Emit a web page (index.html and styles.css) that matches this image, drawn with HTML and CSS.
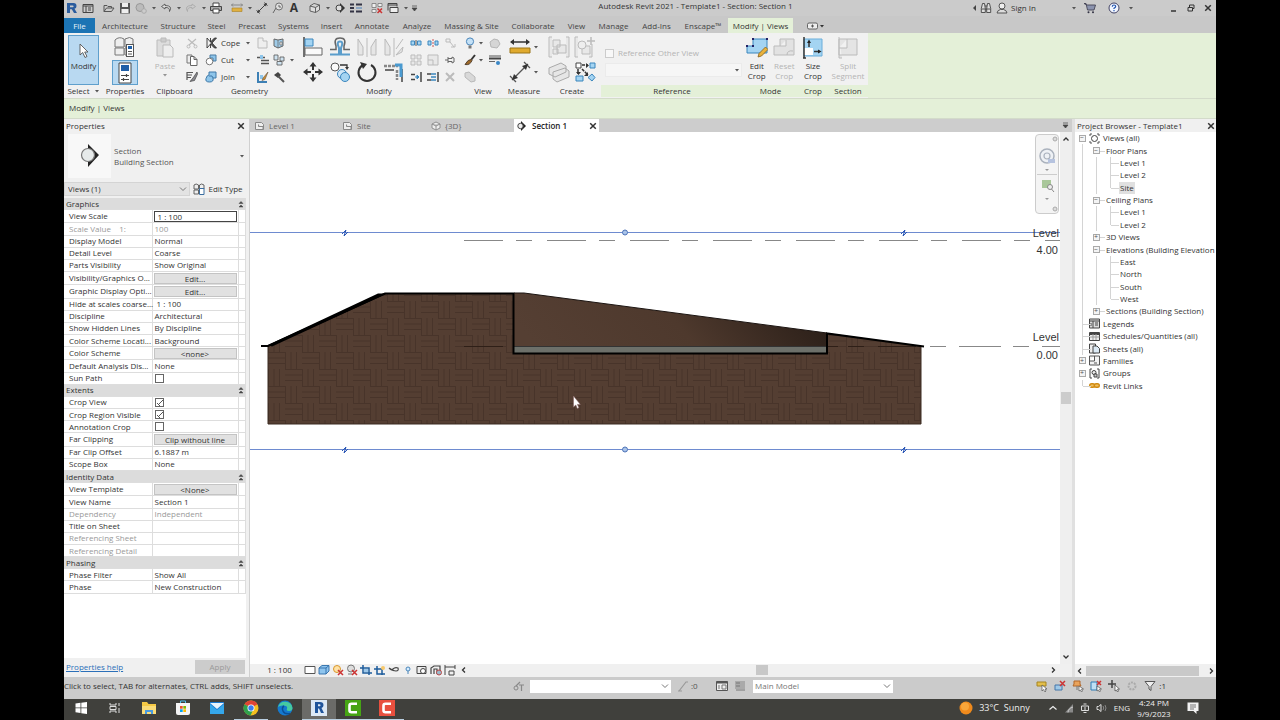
FILE: index.html
```html
<!DOCTYPE html>
<html lang="en">
<head>
<meta charset="utf-8">
<title>Autodesk Revit 2021 - Template1 - Section: Section 1</title>
<link rel="stylesheet" href="styles.css">
</head>
<body>
<svg class="defs" width="0" height="0">
  <symbol id="dn" viewBox="0 0 6 4"><path d="M1 1h4L3 3.4z" fill="#555"/></symbol>
  <symbol id="chev" viewBox="0 0 8 8"><path d="M1 2.500l3 3 3-3" fill="none" stroke="#777" stroke-width="1"/></symbol>
  <symbol id="dbl" viewBox="0 0 6 8"><path d="M1 3.500l2-2 2 2zM1 7l2-2 2 2z" fill="#444" stroke="#444" stroke-width=".5"/></symbol>
  <symbol id="close" viewBox="0 0 8 8"><path d="M1.2 1.2l5.600 5.600M6.800 1.200L1.200 6.800" stroke="#333" stroke-width="1.500"/></symbol>
  <symbol id="plan" viewBox="0 0 12 10"><path d="M1.500 1.500h6l2 2v5h-8zM4.500 3.500v2h4.500v3" fill="#eee" stroke="#888"/></symbol>
</svg>
<div class="app">

<header class="titlebar">
  <div class="qat">
    <button class="q" aria-label="Revit"><svg width="14" height="14" viewBox="0 0 14 14"><path d="M2 2h6.500q3 0 3 3 0 2.400-2 2.800L12 12H9L6.800 8.200H5V12H2zM5 4.400v1.800h2.600q1 0 1-.9t-1-.9z" fill="#2a5c9e"/></svg></button>
    <button class="q" aria-label="Home"><svg width="12" height="12" viewBox="0 0 12 12"><path d="M1 2.500h10v8H1zM1 4h10M4 4v6.500M6 6h3M6 8h3" fill="none" stroke="#444"/></svg></button>
    <span class="gap"></span>
    <button class="q" aria-label="Open"><svg width="12" height="12" viewBox="0 0 12 12"><path d="M1 9.500v-6h3l1 1h3.500V6M1 9.500L3.500 6H11L8.500 9.500z" fill="none" stroke="#555"/></svg></button>
    <button class="q" aria-label="Save"><svg width="12" height="12" viewBox="0 0 12 12"><path d="M1 1h10v10.500H1z" fill="#555"/><path d="M3 1h6v4H3zM2.500 7h7v4h-7z" fill="#eee"/></svg></button>
    <button class="q" aria-label="Synchronize"><svg width="12" height="12" viewBox="0 0 12 12"><circle cx="5" cy="5.500" r="4" fill="#bbb" stroke="#999"/><circle cx="9" cy="9" r="2.300" fill="#ccc" stroke="#aaa"/></svg></button>
    <button class="a" aria-label="More"><svg width="6" height="4"><use href="#dn"/></svg></button>
    <button class="q" aria-label="Undo"><svg width="12" height="12" viewBox="0 0 12 12"><path d="M5 2L1.500 4.500 5 7V5.500q5-.5 4.500 4Q13 3.500 5 3.500z" fill="#ddd" stroke="#555" stroke-width=".9"/></svg></button>
    <button class="a" aria-label="More"><svg width="6" height="4"><use href="#dn"/></svg></button>
    <button class="q" aria-label="Redo"><svg width="12" height="12" viewBox="0 0 12 12"><path d="M7 2l3.500 2.500L7 7V5.500q-5-.5-4.500 4Q-1 3.500 7 3.500z" fill="#ccc" stroke="#aaa" stroke-width=".9"/></svg></button>
    <button class="a" aria-label="More"><svg width="6" height="4"><use href="#dn"/></svg></button>
    <button class="q" aria-label="Print"><svg width="12" height="12" viewBox="0 0 12 12"><path d="M3 4V1h6v3" fill="#fff" stroke="#444"/><path d="M.5 4.500h11v4H.5z" fill="#aaa" stroke="#444"/><path d="M3 7h6v4H3z" fill="#fff" stroke="#444"/></svg></button>
    <span class="gap"></span>
    <button class="q" aria-label="Measure"><svg width="12" height="12" viewBox="0 0 12 12"><path d="M.5 3h11M2 1.500L.5 3 2 4.500M10 1.500L11.500 3 10 4.500" fill="none" stroke="#777" stroke-width=".8"/><path d="M1 6h10v3.500H1z" fill="#e0b040" stroke="#a98022" stroke-width=".6"/></svg></button>
    <button class="a" aria-label="More"><svg width="6" height="4"><use href="#dn"/></svg></button>
    <button class="q" aria-label="Dimension"><svg width="12" height="12" viewBox="0 0 12 12"><path d="M2 10L10 2M.5 8.500l3 3M8.500.5l3 3" fill="none" stroke="#444"/><path d="M1 11l1-3.500 2.500 2.500zM11 1l-1 3.500L7.500 2z" fill="#444"/></svg></button>
    <button class="q" aria-label="Tag"><svg width="12" height="12" viewBox="0 0 12 12"><circle cx="7" cy="4.500" r="3.500" fill="#ddd" stroke="#666" stroke-width=".9"/><path d="M4 6L1 11M7 3v2h2" fill="none" stroke="#666"/></svg></button>
    <button class="q bold" aria-label="Text">A</button>
    <span class="gap"></span>
    <button class="q" aria-label="3D view"><svg width="12" height="12" viewBox="0 0 12 12"><path d="M1 4l4-2.500L10.500 3v5L6.500 10.500 1 9zM1 4l5.500 1.500L10.500 3M6.500 5.500v5" fill="#ddd" stroke="#555" stroke-width=".9"/></svg></button>
    <button class="a" aria-label="More"><svg width="6" height="4"><use href="#dn"/></svg></button>
    <button class="q" aria-label="Section"><svg width="12" height="12" viewBox="0 0 12 12"><path d="M6 1l5 5-5 5z" fill="#333"/><circle cx="5" cy="6" r="3" fill="#ddd" stroke="#444"/></svg></button>
    <button class="q" aria-label="Thin lines"><svg width="12" height="12" viewBox="0 0 12 12"><path d="M0 2.500h4M6 2.500h6M0 6h4M0 9.500h4M6 9.500h6" stroke="#334" stroke-width="2"/><path d="M6 6h6" stroke="#4a7fb8" stroke-width="1"/></svg></button>
    <span class="gap"></span>
    <button class="q" aria-label="Close inactive"><svg width="12" height="12" viewBox="0 0 12 12"><path d="M1 1.500h4v4H1zM7 1.500h4v3H7zM1 7.500h4v3H1z" fill="#eee" stroke="#777" stroke-width=".8"/><path d="M6.500 6.500l4.500 4.500M11 6.500L6.500 11" stroke="#c33" stroke-width="1.500"/></svg></button>
    <button class="q" aria-label="Switch windows"><svg width="12" height="12" viewBox="0 0 12 12"><path d="M1 8.500v-7h9v3M1 3h9" fill="none" stroke="#444"/><path d="M3 5.500h8v5H3z" fill="#eee" stroke="#444"/></svg></button>
    <button class="a" aria-label="More"><svg width="6" height="4"><use href="#dn"/></svg></button>
    <button class="a" aria-label="Customize"><svg width="7" height="7" viewBox="0 0 7 7"><path d="M1 1h5M1 3h5L3.500 6z" fill="#444" stroke="#444" stroke-width=".7"/></svg></button>
  </div>
  <h1 class="title">Autodesk Revit 2021 - Template1 - Section: Section 1</h1>
  <div class="account">
    <svg width="6" height="6" viewBox="0 0 6 6"><path d="M4 0v6L1 3z" fill="#444"/></svg>
    <button class="q" aria-label="Search"><svg width="12" height="12" viewBox="0 0 12 12"><path d="M2.500 1.500h2l.8 5v4h-4v-4zM9.500 1.500h-2l-.8 5v4h4v-4zM5 4h2M1.500 7h9" fill="#ddd" stroke="#444" stroke-width=".9"/></svg></button>
    <button class="sign"><svg width="12" height="12" viewBox="0 0 12 12"><circle cx="6" cy="4" r="3" fill="#eee" stroke="#555"/><path d="M1 11q.5-3 3.500-3.500h3Q10.500 8 11 11z" fill="#ddd" stroke="#555"/></svg>Sign In</button>
    <button class="a far" aria-label="Account menu"><svg width="6" height="4"><use href="#dn"/></svg></button>
    <button class="q wide" aria-label="App store"><svg width="12" height="12" viewBox="0 0 12 12"><path d="M0 1.500h2l1.500 6.500h6.500L11.500 3H3z" fill="#8b93ae" stroke="#445" stroke-width=".9"/><circle cx="4.500" cy="10.300" r="1" fill="#334"/><circle cx="9" cy="10.300" r="1" fill="#334"/></svg></button>
    <button class="q wide" aria-label="Help"><svg width="12" height="12" viewBox="0 0 12 12"><circle cx="6" cy="6" r="5" fill="#f2f6ff" stroke="#446"/><path d="M4.300 4.800Q4.300 3 6 3t1.700 1.500Q7.700 5.300 6 6.300V7M6 8v1.300" fill="none" stroke="#2457b0" stroke-width="1.200"/></svg></button>
    <button class="a" aria-label="Help menu"><svg width="6" height="4"><use href="#dn"/></svg></button>
    <div class="winbtns">
      <button aria-label="Minimize"><svg width="8" height="8" viewBox="0 0 8 8"><path d="M1 7h5" stroke="#333" stroke-width="1.500"/></svg></button>
      <button aria-label="Restore"><svg width="8" height="8" viewBox="0 0 8 8"><path d="M1 3.500h4.500V7H1zM2.500 3V1H7v3.500H5.500" fill="none" stroke="#333"/></svg></button>
      <button aria-label="Close"><svg width="8" height="8"><use href="#close"/></svg></button>
    </div>
  </div>
</header>

<nav class="tabs">
  <button class="file">File</button><button>Architecture</button><button>Structure</button><button>Steel</button><button>Precast</button><button>Systems</button><button>Insert</button><button>Annotate</button><button>Analyze</button><button>Massing &amp; Site</button><button>Collaborate</button><button>View</button><button>Manage</button><button>Add-Ins</button><button>Enscape™</button><button class="on">Modify | Views</button>
  <button aria-label="Ribbon display"><svg width="18" height="8" viewBox="0 0 18 8"><rect x=".5" y="1" width="10" height="6" rx="1.500" fill="#eee" stroke="#555" stroke-width=".9"/><path d="M5.500 2.500v3M4 4h3" stroke="#555"/><path d="M13 3h4l-2 2.500z" fill="#333"/></svg></button>
</nav>

<section class="ribbon">
  <div class="panel p-select">
    <div class="body"><button class="modify"><svg width="14" height="16" viewBox="0 0 14 16"><path d="M3 1v11l2.700-2.500L8 14.500l2-1L7.700 9H11z" fill="#fff" stroke="#555" stroke-width=".9"/></svg><span>Modify</span></button></div>
    <button class="plabel">Select <svg width="6" height="4"><use href="#dn"/></svg></button>
  </div>
  <div class="panel p-props">
    <div class="body two">
      <button aria-label="Type properties"><svg width="22" height="22" viewBox="0 0 22 22"><path d="M1 4q4-4 9-1v8H1zM11 3q5-3 8 0v8h-8zM1 12h9v7H1zM11 12h8v7h-8z" fill="#eee" stroke="#777"/><rect x="12.500" y="8.500" width="7" height="12" fill="#fff" stroke="#555"/><path d="M14 10h4v3h-4z" fill="#1f5fa8"/><path d="M14 15.500h4M14 18h4" stroke="#555"/></svg></button>
      <button class="lit" aria-label="Properties"><svg width="22" height="22" viewBox="0 0 22 22"><path d="M5 1h12v20H5z" fill="#fff" stroke="#444"/><path d="M7 3h8v6H7z" fill="#1f5fa8"/><path d="M7 13.500h8M7 17.500h8M12.500 12v3M9.500 16v3" stroke="#444" stroke-width="1.200"/></svg></button>
    </div>
    <h2 class="plabel">Properties</h2>
  </div>
  <div class="panel p-clip">
    <div class="body row">
      <button class="big off"><svg width="20" height="22" viewBox="0 0 20 22"><path d="M2 3h13v16H2z" fill="#ddd" stroke="#bbb"/><path d="M6 1h5v4H6z" fill="#ccc" stroke="#bbb"/><path d="M8 8h7l3 3v9H8z" fill="#eee" stroke="#bbb"/></svg><span>Paste</span><svg width="6" height="4"><use href="#dn"/></svg></button>
      <div class="small one">
        <button aria-label="Cut to clipboard"><svg width="12" height="12" viewBox="0 0 12 12"><path d="M2 2l7 6M10 2L3 8" stroke="#bbb" stroke-width="1.200"/><circle cx="2.500" cy="9.500" r="1.500" fill="none" stroke="#bbb"/><circle cx="9.500" cy="9.500" r="1.500" fill="none" stroke="#bbb"/></svg></button>
        <button aria-label="Copy to clipboard"><svg width="12" height="12" viewBox="0 0 12 12"><path d="M1 1h5v8H1z" fill="#eee" stroke="#777"/><path d="M4.500 2.500H8l3 3v6H4.500zM8 2.500v3h3" fill="#fff" stroke="#666"/></svg></button>
        <button aria-label="Match type"><svg width="12" height="12" viewBox="0 0 12 12"><path d="M1 1.500h6M1 4h5M1 6.500h4M1 1v8" stroke="#555" stroke-width="1.200"/><path d="M11 1L7 7 4 10.500l4.500-1L11.500 3z" fill="#8a8a90" stroke="#444" stroke-width=".7"/></svg></button>
      </div>
    </div>
    <h2 class="plabel">Clipboard</h2>
  </div>
  <div class="panel p-geo">
    <div class="body small geo">
      <button class="txt"><svg width="13" height="12" viewBox="0 0 13 12"><path d="M2 1v10M5.500 1v4l4-4h2L7 6l4.500 5h-2l-4-4v4M5.500 5L2 1M5.500 7L2 11" fill="#555" stroke="#333" stroke-width=".9"/></svg><span>Cope</span><svg width="6" height="4"><use href="#dn"/></svg></button>
      <button aria-label="Uncope"><svg width="12" height="12" viewBox="0 0 12 12"><path d="M1 1h5v3h4v7H1z" fill="#eee" stroke="#bbb"/></svg></button>
      <button aria-label="Split face"><svg width="12" height="12" viewBox="0 0 12 12"><path d="M1 2l4 1 5-1v7l-5 2-4-2z" fill="#9fcbe8" stroke="#666"/><path d="M5 3v8M7 5h2v3H7z" fill="#fff" stroke="#666" stroke-width=".7"/></svg></button>
      <button class="txt"><svg width="13" height="12" viewBox="0 0 13 12"><path d="M5 1h6v6H8V4H5z" fill="#8ec5ea" stroke="#4a7ca3"/><circle cx="4.500" cy="7.500" r="3.300" fill="#fff" stroke="#777"/></svg><span>Cut</span><svg width="6" height="4"><use href="#dn"/></svg></button>
      <button aria-label="Wall joins"><svg width="12" height="12" viewBox="0 0 12 12"><path d="M0 3.500h8M4 6.500h8M4 9.500h8" stroke="#555" stroke-width="1.500"/><path d="M3 1v4h3V1z" fill="#8ec5ea"/></svg></button>
      <button class="arr" aria-label="Beam joins"><svg width="12" height="12" viewBox="0 0 12 12"><path d="M1 1h4v5H1zM7 3h4v4H7zM4 7.500h5V11H4z" fill="#cfe3f0" stroke="#555" stroke-width=".8"/></svg><svg width="6" height="4"><use href="#dn"/></svg></button>
      <button class="txt"><svg width="13" height="12" viewBox="0 0 13 12"><path d="M4 1h7v6H8q1 4-3.500 4T1 7.500 4 4z" fill="#8ec5ea" stroke="#3f79a8"/><path d="M4 5q4-1 4 2" fill="none" stroke="#3f79a8"/></svg><span>Join</span><svg width="6" height="4"><use href="#dn"/></svg></button>
      <button aria-label="Paint"><svg width="12" height="12" viewBox="0 0 12 12"><path d="M1 1v10h9" fill="none" stroke="#3d80b5" stroke-width="2"/><path d="M3 4h3v4H3z" fill="#8ec5ea"/><path d="M11 1L6 7l-1 2.500L8 8.500z" fill="#c98a30" stroke="#654" stroke-width=".6"/></svg></button>
      <button aria-label="Demolish"><svg width="12" height="12" viewBox="0 0 12 12"><path d="M1 4l4-3 3 3-3 3z" fill="#444"/><path d="M5 5l6 6" stroke="#555" stroke-width="2"/></svg></button>
    </div>
    <h2 class="plabel">Geometry</h2>
  </div>
  <div class="panel p-mod">
    <div class="body row">
      <div class="large four">
        <button aria-label="Align"><svg width="22" height="22" viewBox="0 0 22 22"><path d="M2 1v20" stroke="#444" stroke-width="1.500"/><path d="M3 3h8v7H3z" fill="#a4d4f2" stroke="#3b86bd"/><path d="M3 12h17v7H3z" fill="#fafafa" stroke="#666"/></svg></button>
        <button aria-label="Offset"><svg width="22" height="22" viewBox="0 0 22 22"><path d="M1 13.500h6V10Q4 2 11 2t4 8v3.500h6" fill="none" stroke="#666" stroke-width="1.500"/><path d="M1 18.500h9V12Q7 5.500 11 5.500T12 12v6.500h9" fill="none" stroke="#5b9dcb" stroke-width="2"/></svg></button>
        <button aria-label="Mirror pick"><svg width="22" height="22" viewBox="0 0 22 22"><path d="M2 3v16h5v-8zM20 3v16h-5v-8zM11 2v19" fill="#e6e6e6" stroke="#bbb"/></svg></button>
        <button aria-label="Mirror draw"><svg width="22" height="22" viewBox="0 0 22 22"><path d="M2 3v16h5v-8zM11 2v19M20 3L13 13M20 11l-7 8 6-3z" fill="#e6e6e6" stroke="#bbb"/></svg></button>
        <button aria-label="Move"><svg width="22" height="22" viewBox="0 0 22 22"><path d="M11 1l3.500 4.500h-7zM11 21l3.500-4.500h-7zM1 11l4.500-3.500v7zM21 11l-4.500-3.500v7z" fill="#333"/><path d="M11 4v14M4 11h14" stroke="#333" stroke-width="2" stroke-dasharray="5 4"/></svg></button>
        <button aria-label="Copy"><svg width="22" height="22" viewBox="0 0 22 22"><circle cx="6" cy="6" r="4" fill="#fafafa" stroke="#555"/><path d="M11 4h7v3" fill="none" stroke="#333" stroke-width="1.300"/><path d="M16 6h4l-2 3z" fill="#333"/><circle cx="13" cy="13" r="4.500" fill="#cfe6f7" stroke="#3b86bd"/><circle cx="16" cy="16" r="4.500" fill="#a4d4f2" stroke="#3b86bd"/></svg></button>
        <button aria-label="Rotate"><svg width="22" height="22" viewBox="0 0 22 22"><path d="M7 4a8.500 8.500 0 1 0 8 0" fill="none" stroke="#333" stroke-width="2"/><path d="M4 1l7 2-4 5z" fill="#333"/></svg></button>
        <button aria-label="Trim"><svg width="22" height="22" viewBox="0 0 22 22"><path d="M1 5h14M14 9v10" stroke="#888" stroke-width="2.500" stroke-dasharray="3 1"/><path d="M2 9h9M19 8v13" stroke="#444" stroke-width="1.500"/><path d="M12 4h6v12" fill="none" stroke="#4a9ad0" stroke-width="3"/></svg></button>
      </div>
      <div class="small three">
        <button aria-label="Split"><svg width="12" height="12" viewBox="0 0 12 12"><path d="M1 4h3.500v4H1zM7.500 4H11v4H7.500z" fill="#a4d4f2" stroke="#3b86bd"/><path d="M6 3v6" stroke="#555"/></svg></button>
        <button aria-label="Split with gap"><svg width="12" height="12" viewBox="0 0 12 12"><path d="M1 4h3v4H1zM8 4h3v4H8z" fill="#a4d4f2" stroke="#3b86bd"/><path d="M6 2v8" stroke="#c55" stroke-dasharray="2 1"/></svg></button>
        <button aria-label="Unpin"><svg width="12" height="12" viewBox="0 0 12 12"><path d="M2 2h4v3H2zM6 5l4 5M7 10h4V7" fill="none" stroke="#bbb"/></svg></button>
        <button aria-label="Array"><svg width="12" height="12" viewBox="0 0 12 12"><path d="M1 1h4v4H1zM7 1h4v4H7zM1 7h4v4H1zM7 7h4v4H7z" fill="#e8e8e8" stroke="#bbb"/></svg></button>
        <button aria-label="Scale"><svg width="12" height="12" viewBox="0 0 12 12"><path d="M1 1h10v10H1zM1 6h5v5" fill="#e8e8e8" stroke="#bbb"/></svg></button>
        <button aria-label="Pin"><svg width="12" height="12" viewBox="0 0 12 12"><path d="M1 6h3M4 3v6M4 4.500h4V3l2 1v4L8 9V7.500H4" fill="none" stroke="#666"/></svg></button>
        <button aria-label="Trim single"><svg width="12" height="12" viewBox="0 0 12 12"><path d="M1 3.500h4M1 8.500h4M11 1v10" stroke="#444" stroke-width="1.500"/><path d="M5 6h4M7 4l2 2-2 2z" stroke="#3b86bd" fill="#3b86bd"/></svg></button>
        <button aria-label="Trim multiple"><svg width="12" height="12" viewBox="0 0 12 12"><path d="M0 3h4M0 9h4M11 1v10" stroke="#444" stroke-width="1.500"/><path d="M4 3h5M4 6h5M4 9h5" stroke="#3b86bd" stroke-width="1.700"/></svg></button>
        <button aria-label="Delete"><svg width="12" height="12" viewBox="0 0 12 12"><path d="M2 2l8 8M10 2l-8 8" stroke="#bbb" stroke-width="2"/></svg></button>
      </div>
    </div>
    <h2 class="plabel">Modify</h2>
  </div>
  <div class="panel p-view">
    <div class="body small view">
      <button class="arr" aria-label="Hide"><svg width="12" height="12" viewBox="0 0 12 12"><circle cx="6" cy="4.500" r="3.600" fill="#c4e1f7" stroke="#4a86ba"/><path d="M4.500 8.500h3v3h-3z" fill="#777"/></svg><svg width="6" height="4"><use href="#dn"/></svg></button>
      <button aria-label="Displace"><svg width="12" height="12" viewBox="0 0 12 12"><path d="M1 5l4-3 4 1 2 4-3 4-6-1z" fill="#d5d5d5" stroke="#b5b5b5"/></svg></button>
      <button class="arr" aria-label="Override"><svg width="12" height="12" viewBox="0 0 12 12"><path d="M11 1L7 6" stroke="#333" stroke-width="2"/><path d="M7.500 5.500Q4 5 1 10.500q5 1 7-4z" fill="#a06a28" stroke="#543"/></svg><svg width="6" height="4"><use href="#dn"/></svg></button>
      <button aria-label="Linework"><svg width="12" height="12" viewBox="0 0 12 12"><path d="M0 2h12" stroke="#555" stroke-width="1"/><path d="M0 4.500h12" stroke="#444" stroke-width="2"/><path d="M0 7.500h6" stroke="#666"/><circle cx="9" cy="9" r="2" fill="#3a87c6"/></svg></button>
      <button class="arr" aria-label="Group views"><svg width="12" height="12" viewBox="0 0 12 12"><path d="M1 2l4-1 6 5v4l-4 1-6-5z" fill="#d8d8d8" stroke="#b8b8b8"/></svg></button>
    </div>
    <h2 class="plabel">View</h2>
  </div>
  <div class="panel p-meas">
    <div class="body large meas">
      <button aria-label="Measure distance"><svg width="22" height="22" viewBox="0 0 22 22"><path d="M2 6h18" stroke="#333" stroke-width="1.500"/><path d="M5 3L1 6l4 3zM17 3l4 3-4 3z" fill="#333"/><path d="M1 12h20v5H1z" fill="#e0aa2e" stroke="#9a7418"/></svg><svg width="6" height="4"><use href="#dn"/></svg></button>
      <button aria-label="Aligned dimension"><svg width="22" height="22" viewBox="0 0 22 22"><path d="M3 19L19 3M1 15l6 6M15 1l6 6" stroke="#555" stroke-width="1.300"/><path d="M3 19l2-6 4 4zM19 3l-2 6-4-4z" fill="#333"/></svg><svg width="6" height="4"><use href="#dn"/></svg></button>
    </div>
    <h2 class="plabel">Measure</h2>
  </div>
  <div class="panel p-create">
    <div class="body large create">
      <button aria-label="Create group"><svg width="22" height="22" viewBox="0 0 22 22"><path d="M4 1H1v20h3M18 1h3v20h-3M5 4h7v7H5zM9 9h9v8H9zM5 13h5v5H5z" fill="#e8e8e8" stroke="#bbb"/></svg></button>
      <button aria-label="Create similar"><svg width="22" height="22" viewBox="0 0 22 22"><path d="M4 1H1v20h3M18 8v13h-3M8 10h8v8H8z" fill="#e8e8e8" stroke="#bbb"/><circle cx="8" cy="9" r="4" fill="#eee" stroke="#bbb"/><path d="M17 1v8M13 5h8" stroke="#bbb" stroke-width="1.500"/></svg></button>
      <button aria-label="Create assembly"><svg width="22" height="22" viewBox="0 0 22 22"><path d="M1 7l12-5 5 3v6L7 16l-6-3zM5 11l12-4 4 3v6l-12 5-4-3z" fill="#e6e6e6" stroke="#aaa"/></svg></button>
      <button aria-label="Create parts"><svg width="22" height="22" viewBox="0 0 22 22"><path d="M2 2h5v5H2z" fill="#fff" stroke="#444"/><path d="M8 4h6M4 8v5M8 8l6 6" stroke="#333" stroke-width="1.500" stroke-dasharray="3 1"/><path d="M12 2l3 2.500L12 7zM2 11l2.500 3L7 11zM14 11v4h-4z" fill="#333"/><path d="M16 2h5v5h-5zM2 15h7v5H2zM18 13l3 3.500-3 3.500-4-3.500z" fill="#a4d4f2" stroke="#3b86bd"/></svg></button>
    </div>
    <h2 class="plabel">Create</h2>
  </div>
  <div class="panel ctx p-ref">
    <div class="body ref">
      <label><input type="checkbox" disabled>Reference Other View</label>
      <div class="pick"><select aria-label="Reference view" disabled><option></option></select><svg width="6" height="4"><use href="#dn"/></svg></div>
    </div>
    <h2 class="plabel">Reference</h2>
  </div>
  <div class="panel ctx p-mode">
    <div class="body row">
      <button class="big"><svg width="22" height="22" viewBox="0 0 22 22"><path d="M1 9h6V2h14v14H1z" fill="#a4d4f2" stroke="#3b86bd"/><path d="M0 8h2v2H0zM6 8h2v2H6zM6 1h2v2H6zM20 1h2v2h-2z" fill="#226"/><path d="M12 20l1-3.500L19.500 10l2.500 2.500L15.500 19z" fill="#e9b23c" stroke="#85601c" stroke-width=".8"/></svg><span>Edit<br>Crop</span></button>
      <button class="big off"><svg width="22" height="22" viewBox="0 0 22 22"><path d="M1 9h6V2h14v16H1zM7 9h6V3M14 18q0-5 6-4" fill="#e2e2e2" stroke="#bbb"/></svg><span>Reset<br>Crop</span></button>
    </div>
    <h2 class="plabel">Mode</h2>
  </div>
  <div class="panel ctx p-crop">
    <div class="body row">
      <button class="big"><svg width="22" height="22" viewBox="0 0 22 22"><path d="M2 2h18v17H2z" fill="#a4d4f2" stroke="#6aaedb"/><path d="M2 11h9v7H2z" fill="#fff"/><path d="M2 0v21M1 21h3M7 10V4M12 14.500h6" stroke="#333" stroke-width="1.500"/><path d="M5 6l2-3.500L9 6zM16 12.500l3.500 2-3.500 2z" fill="#222"/></svg><span>Size<br>Crop</span></button>
    </div>
    <h2 class="plabel">Crop</h2>
  </div>
  <div class="panel ctx p-sec">
    <div class="body row">
      <button class="big off"><svg width="22" height="22" viewBox="0 0 22 22"><path d="M2 2h18v16H2zM2 11h8V2M2 0v21h3" fill="#e4e4e4" stroke="#bbb"/></svg><span>Split<br>Segment</span></button>
    </div>
    <h2 class="plabel">Section</h2>
  </div>
</section>

<div class="options">Modify | Views</div>

<main class="work">
  <aside class="props">
    <div class="phead"><h2>Properties</h2><button aria-label="Close properties"><svg width="8" height="8"><use href="#close"/></svg></button></div>
    <button class="type">
      <span class="thumb"><svg width="24" height="28" viewBox="0 0 24 28"><path d="M10 2l11 11-11 12v-5l7-7-7-6z" fill="#222"/><circle cx="10" cy="13" r="6.500" fill="#e6eaea" stroke="#777" stroke-width="1.200"/></svg></span>
      <span class="tname">Section<br>Building Section</span>
      <svg width="6" height="4"><use href="#dn"/></svg>
    </button>
    <div class="filter">
      <div class="sel"><select aria-label="Element filter"><option>Views (1)</option></select><svg width="8" height="8"><use href="#chev"/></svg></div>
      <button class="edittype"><svg width="12" height="12" viewBox="0 0 12 12"><path d="M1 2q2-2 4.500 0v4H1zM6.500 2q2-2 4.500 0v4H6.500zM1 7h4.500v4H1z" fill="#eee" stroke="#555" stroke-width=".9"/><path d="M6.500 5.500h4.500v6H6.500z" fill="#fff" stroke="#3b6ea0"/></svg>Edit Type</button>
    </div>
    <div class="gridwrap">
    <table class="pgrid">
      <colgroup><col class="c1"><col class="c2"><col class="c3"></colgroup>
      <tr class="h"><th colspan="2">Graphics</th><td><svg width="6" height="8"><use href="#dbl"/></svg></td></tr>
      <tr><th>View Scale</th><td class="inp"><input type="text" aria-label="View Scale" value="1 : 100"></td><td></td></tr>
      <tr class="dim"><th>Scale Value &nbsp;&nbsp; 1:</th><td>100</td><td></td></tr>
      <tr><th>Display Model</th><td>Normal</td><td></td></tr>
      <tr><th>Detail Level</th><td>Coarse</td><td></td></tr>
      <tr><th>Parts Visibility</th><td>Show Original</td><td></td></tr>
      <tr><th>Visibility/Graphics O...</th><td class="inp"><button>Edit...</button></td><td></td></tr>
      <tr><th>Graphic Display Opti...</th><td class="inp"><button>Edit...</button></td><td></td></tr>
      <tr><th>Hide at scales coarse...</th><td>&nbsp;1 : 100</td><td></td></tr>
      <tr><th>Discipline</th><td>Architectural</td><td></td></tr>
      <tr><th>Show Hidden Lines</th><td>By Discipline</td><td></td></tr>
      <tr><th>Color Scheme Locati...</th><td>Background</td><td></td></tr>
      <tr><th>Color Scheme</th><td class="inp"><button>&lt;none&gt;</button></td><td></td></tr>
      <tr><th>Default Analysis Dis...</th><td>None</td><td></td></tr>
      <tr><th>Sun Path</th><td><input type="checkbox" aria-label="Sun Path"></td><td></td></tr>
      <tr class="h"><th colspan="2">Extents</th><td><svg width="6" height="8"><use href="#dbl"/></svg></td></tr>
      <tr><th>Crop View</th><td><input type="checkbox" aria-label="Crop View" checked></td><td></td></tr>
      <tr><th>Crop Region Visible</th><td><input type="checkbox" aria-label="Crop Region Visible" checked></td><td></td></tr>
      <tr><th>Annotation Crop</th><td><input type="checkbox" aria-label="Annotation Crop"></td><td></td></tr>
      <tr><th>Far Clipping</th><td class="inp"><button>Clip without line</button></td><td></td></tr>
      <tr><th>Far Clip Offset</th><td>6.1887 m</td><td></td></tr>
      <tr><th>Scope Box</th><td>None</td><td></td></tr>
      <tr class="h"><th colspan="2">Identity Data</th><td><svg width="6" height="8"><use href="#dbl"/></svg></td></tr>
      <tr><th>View Template</th><td class="inp"><button>&lt;None&gt;</button></td><td></td></tr>
      <tr><th>View Name</th><td>Section 1</td><td></td></tr>
      <tr class="dim"><th>Dependency</th><td>Independent</td><td></td></tr>
      <tr><th>Title on Sheet</th><td></td><td></td></tr>
      <tr class="dim"><th>Referencing Sheet</th><td></td><td></td></tr>
      <tr class="dim"><th>Referencing Detail</th><td></td><td></td></tr>
      <tr class="h"><th colspan="2">Phasing</th><td><svg width="6" height="8"><use href="#dbl"/></svg></td></tr>
      <tr><th>Phase Filter</th><td>Show All</td><td></td></tr>
      <tr><th>Phase</th><td>New Construction</td><td></td></tr>
    </table>
    </div>
    <div class="pfoot"><a href="#">Properties help</a><button disabled>Apply</button></div>
  </aside>

  <section class="center">
    <div class="doctabs">
      <button><svg width="12" height="10"><use href="#plan"/></svg>Level 1</button>
      <button><svg width="12" height="10"><use href="#plan"/></svg>Site</button>
      <button><svg width="12" height="10" viewBox="0 0 12 10"><path d="M2 3l4-2 4 2v4L6 9 2 7zM2 3l4 2 4-2M6 5v4" fill="#eee" stroke="#888" stroke-width=".9"/></svg>{3D}</button>
      <button class="on"><svg width="10" height="10" viewBox="0 0 10 10"><path d="M5 0l5 5-5 5z" fill="#222"/><circle cx="4.500" cy="5" r="2.700" fill="#eee" stroke="#444"/></svg>Section 1<svg class="x" width="8" height="8"><use href="#close"/></svg></button>
      <button class="tail" aria-label="Tab list"><svg width="7" height="7" viewBox="0 0 7 7"><path d="M1 1h5M1 3h5L3.500 6z" fill="#444" stroke="#444" stroke-width=".7"/></svg></button>
    </div>
    <div class="viewrow">
      <div class="canvas">
        <svg class="drawing" viewBox="250 132 810 532" preserveAspectRatio="xMinYMin slice">
          <defs>
            <pattern id="weave" width="34" height="34" patternUnits="userSpaceOnUse" x="268" y="352">
              <rect width="34" height="34" fill="#543e32"/>
              <path d="M0 .5h17M0 6h17M0 11.500h17M17 17.500h17M17 23h17M17 28.500h17M17.500 0v17M23 0v17M28.500 0v17M.5 17v17M6 17v17M11.500 17v17" stroke="#48342a" stroke-width="1" fill="none"/>
            </pattern>
            <linearGradient id="shade" x1="0" x2="1" y1="0.500" y2="0.350">
              <stop offset="0" stop-color="#553f33"/><stop offset=".5" stop-color="#4e392d"/><stop offset="1" stop-color="#281d17"/>
            </linearGradient>
          </defs>
          <path d="M268 346L385 293H514V353H827V333L921 346V424H268z" fill="url(#weave)"/>
          <path d="M268 346V424H921V346" fill="none" stroke="#3b2a20" stroke-width="1"/>
          <path d="M514 293H524L827 333V347H514z" fill="url(#shade)"/>
          <path d="M514 346H827V353H514z" fill="#6d706a"/>
          <path d="M464 346.500H503M828 346.500H838M848 346.500H864M878 346.500H916" stroke="#2e1f17" stroke-width="1"/>
          <path d="M514 346.500H827" stroke="#333" stroke-width="1"/>
          <path d="M261 346H268L385 293.500H513.500V353.500H827V333.500L924 346.500" fill="none" stroke="#000" stroke-width="2"/>
          <path d="M268 345L378 293.500H387L272 346.500z" fill="#000"/>
          <path d="M514 293H524L827 333" fill="none" stroke="#1c1512" stroke-width="1"/>
          <path d="M464 240.500H1060" stroke="#888" stroke-width="1" stroke-dasharray="39 13 16 15"/>
          <path d="M930 346.500H946M959 346.500H1001M1013 346.500H1029M1042 346.500H1060" stroke="#888" stroke-width="1"/>
          <path d="M250 232.500H1060M250 449.500H1060" stroke="#6e8bd0" stroke-width="1"/>
          <g fill="none" stroke="#2b57b5" stroke-width="1">
            <path d="M342 234l4-4-2 6 4-4M901 234l4-4-2 6 4-4M342 451l4-4-2 6 4-4M901 451l4-4-2 6 4-4"/>
          </g>
          <g fill="#a9c3e8" stroke="#4f74b8"><circle cx="625" cy="232.500" r="2.500"/><circle cx="625" cy="449.500" r="2.500"/></g>
          <g class="lvl"><text x="1059" y="237">Level</text><text x="1058" y="254">4.00</text><text x="1059" y="341">Level</text><text x="1058" y="359">0.00</text></g>
          <path d="M573.500 396v11l2.300-2 1.500 3.500 1.600-.8-1.500-3.300h3z" fill="#fff" stroke="#866" stroke-width=".6"/>
        </svg>
        <div class="navbar">
          <svg width="22" height="80" viewBox="0 0 22 80"><circle cx="19" cy="4" r="2" fill="#ddd" stroke="#aaa"/><circle cx="11" cy="21" r="7" fill="#eef1f5" stroke="#aab2bd" stroke-width="1.500"/><circle cx="11" cy="21" r="3" fill="none" stroke="#aab2bd" stroke-width="1.200"/><path d="M12 24h7v4h-7z" fill="#b6c3df"/><path d="M9 34h4l-2 2zM9 63h4l-2 2z" fill="#999"/><path d="M1 39.500h20" stroke="#ccc"/><path d="M6 45h9v8H6z" fill="#a9c79a"/><circle cx="14" cy="52" r="2.500" fill="#eee" stroke="#888"/><path d="M15.500 54l2.500 3" stroke="#888"/><circle cx="19" cy="74" r="2" fill="#ddd" stroke="#aaa"/></svg>
        </div>
      </div>
      <div class="vscroll"><svg width="8" height="8" viewBox="0 0 8 8"><path d="M1.500 5.500L4 3l2.500 2.500" fill="none" stroke="#333" stroke-width="1.300"/></svg><i></i><svg width="8" height="8" viewBox="0 0 8 8"><path d="M1.500 2.500L4 5l2.500-2.500" fill="none" stroke="#333" stroke-width="1.300"/></svg></div>
    </div>
    <div class="vcb">
      <button class="scale">1 : 100</button>
      <button aria-label="Detail level"><svg width="12" height="12" viewBox="0 0 12 12"><path d="M1 2.500h10v7H1z" fill="#fff" stroke="#555"/></svg></button>
      <button aria-label="Visual style"><svg width="12" height="12" viewBox="0 0 12 12"><path d="M1 4l3-2.500h7V7L8 10H1zM1 4h7v6M8 4l3-2.500" fill="#8fc5ee" stroke="#2d6ca8" stroke-width=".9"/></svg></button>
      <button aria-label="Sun path"><svg width="12" height="12" viewBox="0 0 12 12"><circle cx="5" cy="5" r="3.500" fill="#ffe3a6" stroke="#d9962c"/><path d="M6 6l5 5M11 6l-5 5" stroke="#c33" stroke-width="1.500"/></svg></button>
      <button aria-label="Shadows"><svg width="12" height="12" viewBox="0 0 12 12"><circle cx="5" cy="4.500" r="3.500" fill="#ddd" stroke="#777"/><path d="M2 10h4" stroke="#777"/><path d="M6 6l5 5M11 6l-5 5" stroke="#c33" stroke-width="1.500"/></svg></button>
      <button aria-label="Crop view"><svg width="12" height="12" viewBox="0 0 12 12"><path d="M3 1v8h9M0 4h9v7" fill="none" stroke="#1d5c9c" stroke-width="1.500"/><path d="M4 5h4v3H4z" fill="#9cc8ea"/></svg></button>
      <button aria-label="Show crop region"><svg width="12" height="12" viewBox="0 0 12 12"><path d="M3 2v8h8M0 5h8v6" fill="none" stroke="#1d5c9c" stroke-width="1.500"/><circle cx="9" cy="4" r="2" fill="#f7c86a"/></svg></button>
      <button aria-label="Hide isolate"><svg width="12" height="12" viewBox="0 0 12 12"><path d="M1 4q2 3 4 1t5-1q1 3-2 3T1 4" fill="none" stroke="#444" stroke-width="1.200"/></svg></button>
      <button aria-label="Reveal hidden"><svg width="12" height="12" viewBox="0 0 12 12"><circle cx="6" cy="5" r="2" fill="#d6ecff" stroke="#4a86ba"/><path d="M6 7v3" stroke="#4a86ba"/></svg></button>
      <button aria-label="View properties"><svg width="12" height="12" viewBox="0 0 12 12"><path d="M1 2.500h9v7H1z" fill="#eee" stroke="#444"/><circle cx="7" cy="7" r="2.500" fill="#fff" stroke="#444"/></svg></button>
      <button aria-label="Analytical model"><svg width="12" height="12" viewBox="0 0 12 12"><path d="M1 10V4l3-2h6v6M4 10V5h3v5" fill="none" stroke="#444" stroke-width="1.200"/><circle cx="9" cy="8.500" r="2.500" fill="#9bc" stroke="#b44"/></svg></button>
      <button aria-label="Constraints"><svg width="12" height="12" viewBox="0 0 12 12"><path d="M1 3h10M1 1v10M11 1v4M5 7h5v4H5z" fill="none" stroke="#444"/></svg></button>
      <button aria-label="Scroll left"><svg width="8" height="8" viewBox="0 0 8 8"><path d="M5 1.500L2.500 4 5 6.500" fill="none" stroke="#333" stroke-width="1.300"/></svg></button>
      <div class="hscroll"><i></i></div>
      <button aria-label="Scroll right"><svg width="8" height="8" viewBox="0 0 8 8"><path d="M3 1.500L5.500 4 3 6.500" fill="none" stroke="#333" stroke-width="1.300"/></svg></button>
    </div>
  </section>

  <aside class="browser">
    <div class="phead"><h2>Project Browser - Template1</h2><button aria-label="Close browser"><svg width="8" height="8"><use href="#close"/></svg></button></div>
    <ul class="tree">
      <li><i class="g x first">−</i><svg width="11" height="11" viewBox="0 0 11 11"><circle cx="5.500" cy="5.500" r="3" fill="none" stroke="#444"/><path d="M1 3V1h2M8 1h2v2M1 8v2h2M8 10h2V8" fill="none" stroke="#555"/></svg><b>Views (all)</b></li>
      <li><i class="g v"></i><i class="g x h">−</i><b>Floor Plans</b></li>
      <li><i class="g v"></i><i class="g v"></i><i class="g v h"></i><b>Level 1</b></li>
      <li><i class="g v"></i><i class="g v"></i><i class="g v h"></i><b>Level 2</b></li>
      <li><i class="g v"></i><i class="g v"></i><i class="g l h"></i><b class="cur">Site</b></li>
      <li><i class="g v"></i><i class="g x h">−</i><b>Ceiling Plans</b></li>
      <li><i class="g v"></i><i class="g v"></i><i class="g v h"></i><b>Level 1</b></li>
      <li><i class="g v"></i><i class="g v"></i><i class="g l h"></i><b>Level 2</b></li>
      <li><i class="g v"></i><i class="g x h">+</i><b>3D Views</b></li>
      <li><i class="g v"></i><i class="g x h">−</i><b>Elevations (Building Elevation</b></li>
      <li><i class="g v"></i><i class="g v"></i><i class="g v h"></i><b>East</b></li>
      <li><i class="g v"></i><i class="g v"></i><i class="g v h"></i><b>North</b></li>
      <li><i class="g v"></i><i class="g v"></i><i class="g v h"></i><b>South</b></li>
      <li><i class="g v"></i><i class="g v"></i><i class="g l h"></i><b>West</b></li>
      <li><i class="g v"></i><i class="g x h">+</i><b>Sections (Building Section)</b></li>
      <li><i class="g v h"></i><svg width="11" height="11" viewBox="0 0 11 11"><path d="M.5 1h10v9H.5z" fill="#ddd" stroke="#444"/><path d="M.5 3h10M4 3v7M6 5h3M6 7h3M2 5v3" stroke="#444"/></svg><b>Legends</b></li>
      <li><i class="g v h"></i><svg width="11" height="11" viewBox="0 0 11 11"><path d="M.5 1.500h10v8H.5z" fill="#eee" stroke="#444"/><path d="M.5 3h10" stroke="#444" stroke-width="2"/><path d="M.5 6h10M4 3v6M7 3v6" stroke="#999"/></svg><b>Schedules/Quantities (all)</b></li>
      <li><i class="g v h"></i><svg width="11" height="11" viewBox="0 0 11 11"><path d="M.5 1h6v9h-6z" fill="#eee" stroke="#444"/><path d="M4 3h4l2.500 2.500V10H4z" fill="#dceaf5" stroke="#444"/></svg><b>Sheets (all)</b></li>
      <li><i class="g x">+</i><svg width="11" height="11" viewBox="0 0 11 11"><path d="M.5 1h10v9H.5zM.5 6h5V1M5 8h3" fill="#f4f4f4" stroke="#555"/></svg><b>Families</b></li>
      <li><i class="g x">+</i><svg width="11" height="11" viewBox="0 0 11 11"><path d="M3 1H1v9h2M8 1h2v9H8" fill="none" stroke="#444"/><circle cx="5" cy="4.500" r="2" fill="#eee" stroke="#444"/><path d="M5 6h3v3H5z" fill="#ccc" stroke="#444"/></svg><b>Groups</b></li>
      <li><i class="g l h"></i><svg width="11" height="11" viewBox="0 0 11 11"><rect x=".7" y="3.700" width="5" height="3.600" rx="1.800" fill="#f0c060" stroke="#d08a12" stroke-width="1.400"/><rect x="5.300" y="3.700" width="5" height="3.600" rx="1.800" fill="#f0c060" stroke="#d08a12" stroke-width="1.400"/></svg><b>Revit Links</b></li>
    </ul>
    <div class="bscroll"><svg width="8" height="8" viewBox="0 0 8 8"><path d="M5 1.500L2.500 4 5 6.500" fill="none" stroke="#333" stroke-width="1.300"/></svg><i></i><svg width="8" height="8" viewBox="0 0 8 8"><path d="M3 1.500L5.500 4 3 6.500" fill="none" stroke="#333" stroke-width="1.300"/></svg></div>
  </aside>
</main>

<footer class="status">
  <span class="msg">Click to select, TAB for alternates, CTRL adds, SHIFT unselects.</span>
  <svg width="12" height="12" viewBox="0 0 12 12"><circle cx="3" cy="8" r="2" fill="none" stroke="#888"/><path d="M3 6l4-4M6 5h5M8.500 5v6" fill="none" stroke="#888" stroke-width="1.200"/></svg>
  <div class="sel ws"><select aria-label="Active workset"><option></option></select><svg width="8" height="8"><use href="#chev"/></svg></div>
  <span class="req"><svg width="12" height="12" viewBox="0 0 12 12"><path d="M2 11L9 2h2M1 11h4" fill="none" stroke="#999" stroke-width="1.200"/></svg>:0</span>
  <button aria-label="Design options"><svg width="12" height="12" viewBox="0 0 12 12"><path d="M.5 1.500h11v9H.5z" fill="#eee" stroke="#555"/><path d="M.5 2.500h11" stroke="#555" stroke-width="2"/><path d="M3 5v4M6 5h4v4H6z" stroke="#777" fill="none"/></svg></button>
  <button aria-label="Pick option"><svg width="12" height="12" viewBox="0 0 12 12"><path d="M1 1h10v8H1z" fill="#aaa"/><path d="M2 10h9M2 3h4M2 6h4" stroke="#777"/></svg></button>
  <div class="sel dm"><select aria-label="Design option"><option>Main Model</option></select><svg width="8" height="8"><use href="#chev"/></svg></div>
  <div class="toggles">
    <button aria-label="Select links"><svg width="12" height="12" viewBox="0 0 12 12"><path d="M1 2h9v4H1z" fill="#e3bf4c" stroke="#a58420"/><path d="M6 5v6l1.500-1.500L9 12l1-1-1-2h2z" fill="#fff" stroke="#555" stroke-width=".7"/></svg></button>
    <button aria-label="Select underlay"><svg width="12" height="12" viewBox="0 0 12 12"><path d="M1 5h7v5H1z" fill="#9fc9e8" stroke="#47a"/><path d="M6 1l5 5M11 1L6 6" stroke="#c33" stroke-width="1.500"/></svg></button>
    <button aria-label="Select pinned"><svg width="12" height="12" viewBox="0 0 12 12"><path d="M2 1h6v3L9 6H1l1-2z" fill="#e9a35c" stroke="#b0672a"/><path d="M5 6v4" stroke="#777"/><path d="M7 6v5l1.500-1 1 2 1-1-1-2h2z" fill="#fff" stroke="#555" stroke-width=".7"/></svg></button>
    <button aria-label="Select by face"><svg width="12" height="12" viewBox="0 0 12 12"><path d="M1 2h6v8H1z" fill="#bfe0f5" stroke="#2f7db5"/><path d="M7 1l4 4M11 1L7 5" stroke="#c33" stroke-width="1.500"/><path d="M7 6v5l1.500-1 1 2 1-1-1-2h2z" fill="#fff" stroke="#555" stroke-width=".7"/></svg></button>
    <button aria-label="Drag on selection"><svg width="12" height="12" viewBox="0 0 12 12"><path d="M4 0v8M0 4h8" stroke="#444" stroke-width="1.500"/><path d="M7 5v6l1.500-1 1 2 1-1-1-2h2z" fill="#fff" stroke="#444" stroke-width=".7"/></svg></button>
    <button aria-label="Background processes"><svg width="12" height="12" viewBox="0 0 12 12"><circle cx="6" cy="6" r="3.500" fill="none" stroke="#aaa" stroke-width="2" stroke-dasharray="2 1"/></svg></button>
    <button aria-label="Filter"><svg width="12" height="12" viewBox="0 0 12 12"><path d="M1 1.500h10L7 6.500v4L5 9V6.500z" fill="#eee" stroke="#555"/></svg></button><span>:1</span>
  </div>
</footer>

<footer class="taskbar">
  <div class="apps">
    <button aria-label="Start"><svg width="14" height="14" viewBox="0 0 14 14"><path d="M1.500 2.500l5-.7v4.700h-5zM7.300 1.700L13 1v5.500H7.300zM1.500 7.300h5V12l-5-.7zM7.300 7.300H13V13l-5.700-.8z" fill="#fff"/></svg></button>
    <button aria-label="Task view"><svg width="14" height="14" viewBox="0 0 14 14"><path d="M2 2v2h6V2M2 12v-2h6v2M2 5.500h6v3H2zM11 2v3M11 7v5" fill="none" stroke="#ddd"/></svg></button>
    <button aria-label="File Explorer"><svg width="16" height="14" viewBox="0 0 16 14"><path d="M1 1h5l1.500 2H15v9H1z" fill="#f6c944"/><path d="M1 5h14v8H1z" fill="#fbdc78"/><path d="M4 9h8v4h-2v-2H6v2H4z" fill="#4a9be0"/></svg></button>
    <button aria-label="Store"><svg width="16" height="16" viewBox="0 0 16 16"><path d="M1 3h14v10q0 2-2 2H3q-2 0-2-2z" fill="#f4f4f4"/><path d="M5.500 3V1h5v2" fill="none" stroke="#4ac0ee"/><path d="M5 6h2.700v2.700H5z" fill="#e8502a"/><path d="M8.300 6H11v2.700H8.300z" fill="#7fba00"/><path d="M5 9.300h2.700V12H5z" fill="#00a4ef"/><path d="M8.300 9.300H11V12H8.300z" fill="#ffb900"/></svg></button>
    <button aria-label="Mail"><svg width="16" height="14" viewBox="0 0 16 14"><path d="M1 1h14v12H1z" fill="#1a78cf"/><path d="M1 2h14L8 8z" fill="#e8f4fd"/><path d="M1 13V3l7 6 7-6v10z" fill="#35a7ea"/></svg></button>
    <button class="open" aria-label="Chrome"><svg width="18" height="16" viewBox="0 0 18 16"><circle cx="9" cy="8" r="7.500" fill="#f4c020"/><path d="M9 8L2.500 4.200A7.500 7.500 0 0 1 15.500 4.300z" fill="#de4436"/><path d="M2.500 4.200A7.500 7.500 0 0 0 8.500 15.500L11.500 9 9 8z" fill="#2fa04e"/><circle cx="9" cy="8" r="3.500" fill="#fff"/><circle cx="9" cy="8" r="2.700" fill="#3b7ded"/></svg></button>
    <button aria-label="Edge"><svg width="18" height="16" viewBox="0 0 18 16"><circle cx="9" cy="8" r="7.500" fill="#1479cf"/><path d="M2 7a7.500 7.500 0 0 1 14.500 1q0 3-3.500 3-3 0-2-2.500T8 5.500Q4 5 2 7z" fill="#45c9a0"/><path d="M8 6q-2.500 1.500-1 5t7 2.500" fill="none" stroke="#0c4f94" stroke-width="1.500"/></svg></button>
    <button class="open act" aria-label="Revit"><svg width="16" height="16" viewBox="0 0 16 16"><path d="M0 0h16v16H0z" fill="#dce8f5"/><path d="M4 2h5q3.500 0 3.500 3.200 0 2.200-2 2.800L13 13h-3L8 8.500H7V13H4zM7 4.300v2h1.500q1 0 1-1t-1-1z" fill="#1f549b"/></svg></button>
    <button class="open" aria-label="Camtasia"><svg width="18" height="18" viewBox="0 0 18 18"><path d="M1 1h16v16H1z" fill="#46a414"/><path d="M13 4.800H7.500q-2 0-2 2v4.400q0 2 2 2H13" fill="none" stroke="#fff" stroke-width="2.600"/></svg></button>
    <button class="open" aria-label="Camtasia Recorder"><svg width="18" height="18" viewBox="0 0 18 18"><path d="M1 1h16v16H1z" fill="#e8503f"/><path d="M13 4.800H7.500q-2 0-2 2v4.400q0 2 2 2H13" fill="none" stroke="#fff" stroke-width="2.600"/></svg></button>
  </div>
  <div class="tray">
    <span class="weather"><svg width="14" height="14" viewBox="0 0 14 14"><circle cx="7" cy="7" r="6.500" fill="#f08a1c"/><circle cx="6" cy="5.500" r="4" fill="#f9a63a"/></svg>33°C &nbsp;Sunny</span>
    <svg class="up" width="10" height="10" viewBox="0 0 10 10"><path d="M1.500 6.500L5 3.500l3.500 3" fill="none" stroke="#eee" stroke-width="1.200"/></svg>
    <svg width="10" height="10" viewBox="0 0 10 10"><path d="M9 1v8.500H1z" fill="#888"/><path d="M4 9.500q0-4 5-5.500" fill="none" stroke="#ccc"/></svg>
    <svg width="10" height="10" viewBox="0 0 10 10"><path d="M1.500 3h7v4.500h-7zM3.500 1h3M3.500 9.500h3M5 4v3" fill="none" stroke="#ddd"/></svg>
    <svg width="12" height="10" viewBox="0 0 12 10"><path d="M1 3.500h1.500L5 1.500v7L2.500 6.500H1z" fill="none" stroke="#ddd"/><path d="M7 3q1.500 2 0 4M9 2q2 3 0 6" fill="none" stroke="#888"/></svg>
    <span class="lang">ENG</span>
    <time>4:24 PM<br>9/9/2023</time>
    <svg class="note" width="14" height="14" viewBox="0 0 14 14"><path d="M1.500 1.500h11v8.500h-2v3l-3-3h-6z" fill="#f2f2f2"/><path d="M4 4h6M4 6h6M4 8h4" stroke="#777"/></svg>
  </div>
</footer>
</div>
</body>
</html>
```
FILE: styles.css
```css
* { box-sizing: border-box; }
body { margin: 0; background: #000; color: #333; font: 8px/10px "Open Sans", "Noto Sans", sans-serif; }
button, input, select { font: inherit; color: inherit; margin: 0; padding: 0; border: 0; background: none; border-radius: 0; }
button { display: flex; align-items: center; justify-content: center; white-space: nowrap; }
h1, h2 { margin: 0; font: inherit; }
svg { flex: none; display: block; }
.defs { position: absolute; }
.app { display: flex; flex-direction: column; height: 100vh; margin: 0 5%; background: #f0f0f0; overflow: hidden; }

.titlebar { flex: none; display: flex; height: 16px; background: #cbcbcb; }
.qat, .account { display: flex; align-items: center; flex: none; }
.q { width: 16px; height: 16px; }
.q.bold { font-size: 12px; font-weight: 700; }
.q.wide { width: 24px; }
.a { width: 9px; height: 16px; }
.gap { width: 5px; }
.title { flex: 1; text-align: center; line-height: 12px; }
.sign { gap: 3px; width: 41px; justify-content: flex-start; }
.sign svg { margin-left: 2px; }
.far { margin-left: 34px; }
.account { width: 244px; }
.winbtns { display: flex; margin-left: auto; }
.winbtns button { width: 17px; height: 16px; }

.tabs { flex: none; height: 17px; background: #c8c8c8; display: grid; align-items: end; grid-template-columns: 31px 60px 46px 31px 40px 43px 33px 48px 42px 67px 56px 31px 43px 43px 50px 65px 46px; }
.tabs button { height: 15px; color: #444; }
.tabs .file { background: #1c74b4; color: #e8f2fa; }
.tabs .on { background: #e4f0d8; color: #333; }

.ribbon { flex: none; display: flex; height: 66px; background: #e4f0d8; border-bottom: 1px solid #d3dbca; }
.panel { flex: none; display: flex; flex-direction: column; background: #f1f1f1; padding-top: 1px; }
.body { height: 51px; }
.plabel { height: 12px; line-height: 12px; text-align: center; }
button.plabel { gap: 4px; }
.ctx .plabel { background: #e4f0d8; }
.row { display: flex; }
.p-select { width: 39px; }
.p-props { width: 44px; }
.p-clip { width: 55px; }
.p-geo { width: 95px; }
.p-mod { width: 164px; }
.p-view { width: 44px; }
.p-meas { width: 38px; }
.p-create { width: 58px; }
.p-ref { width: 142px; }
.p-mode { width: 55px; }
.p-crop { width: 30px; }
.p-sec { width: 40px; }
.modify { flex-direction: column; gap: 2px; padding-bottom: 7px; width: 31px; height: 50px; margin: 1px auto; background: #b9d9f1; border: 1px solid #5f9fcc; }
.two { display: grid; justify-content: center; grid-template-rows: 26px 25px; }
.two button { width: 26px; }
.two .lit { background: #b9d9f1; border: 1px solid #5f9fcc; }
.big { flex-direction: column; justify-content: flex-start; gap: 2px; flex: 1; padding-top: 3px; }
.p-clip .big { flex: none; width: 36px; }
.off { color: #b4b4b4; }
.off use { opacity: .6; }
.small { display: grid; grid-auto-rows: 17px; }
.small.one { grid-template-columns: 17px; }
.small.three { grid-template-columns: repeat(3, 17px); }
.small.geo { grid-template-columns: 51px 17px 25px; padding-left: 1px; }
.small.geo > button:nth-child(3n) { justify-content: flex-start; gap: 4px; padding-left: 2px; }
.small.geo .txt { justify-content: flex-start; gap: 3px; padding-left: 2px; }
.txt span { width: 21px; text-align: left; }
.small.view { grid-template-columns: 24px 20px; }
.view .arr { justify-content: flex-start; gap: 2px; padding-left: 3px; }
.large { display: grid; grid-auto-rows: 25px; }
.large.four { grid-template-columns: repeat(4, 27px); padding-left: 2px; }
.large.meas { grid-template-columns: 34px; justify-content: center; }
.large.meas button { gap: 2px; }
.large.create { grid-template-columns: 26px 26px; justify-content: center; }
.ref { display: flex; flex-direction: column; padding: 12px 1px 0 4px; gap: 3px; }
.ref label { display: flex; align-items: center; gap: 4px; height: 14px; color: #b4b4b4; }
input[type=checkbox] { appearance: none; display: block; width: 9px; height: 9px; border: 1px solid #666; background: #fff; }
.ref input[type=checkbox] { border-color: #ccc; background: #f8f8f8; }
.pick { display: flex; align-items: center; justify-content: space-between; height: 14px; border: 1px solid #ebebeb; background: #f6f6f6; padding-right: 1px; }
.pick select, .sel select { appearance: none; flex: 1; min-width: 0; height: 100%; opacity: 1; }

.options { flex: none; height: 20px; padding: 4px 5px; background: #e4f0d8; border-bottom: 1px solid #d3dbca; }

.work { flex: 1; min-height: 0; display: flex; background: #f0f0f0; }
.phead { flex: none; height: 13px; display: flex; align-items: center; justify-content: space-between; padding-left: 2px; background: #f0f0f0; }
.phead button { width: 11px; height: 12px; }
.props { flex: none; width: 186px; display: flex; flex-direction: column; border-right: 1px solid #d0d0d0; }
.props .phead { width: 182px; }
.type { flex: none; height: 48px; width: 182px; padding: 0 1px 0 4px; justify-content: flex-start; text-align: left; background: #f0f0f0; }
.thumb { width: 43px; height: 44px; display: flex; align-items: center; justify-content: center; background: #f8f8f8; }
.tname { flex: 1; padding-left: 3px; line-height: 11px; color: #555; }
.filter { flex: none; display: flex; width: 182px; height: 18px; align-items: center; }
.sel { display: flex; align-items: center; padding-right: 2px; background: #fff; }
.filter .sel { width: 126px; height: 14px; padding-left: 3px; background: #e3e3e3; border: 1px solid #d4d4d4; }
.edittype { flex: 1; gap: 3px; }
.gridwrap { flex: 1; width: 182px; background: #fff; }
.pgrid { width: 181px; height: 396px; table-layout: fixed; border-collapse: collapse; }
.c1 { width: 88px; }
.c2 { width: 86px; }
.c3 { width: 7px; }
.pgrid th, .pgrid td { padding: 0 0 0 2px; font-weight: 400; text-align: left; white-space: nowrap; line-height: 10px; border-right: 1px solid #ddd; border-bottom: 1px solid #ddd; }
.pgrid th { padding-left: 5px; }
.pgrid td:last-child { padding: 0; }
.pgrid .h { background: #dcdcdc; }
.pgrid .h th { padding-left: 2px; border-right: 0; }
.pgrid .dim { color: #999; }
.pgrid td.inp { padding: 0 1px; }
.inp button { width: 100%; height: 11px; line-height: 9px; background: #e1e1e1; border: 1px solid #c4c4c4; }
.inp input { display: block; width: 100%; height: 11px; padding-left: 3px; border: 1px solid #444; background: #fff; }
.pgrid input:checked { background: linear-gradient(45deg, transparent 40%, #555 40%, #555 60%, transparent 60%) 1px 4px / 3px 3px no-repeat, linear-gradient(135deg, transparent 42%, #555 42%, #555 58%, transparent 58%) 2px 1px / 5px 5px no-repeat, #fff; }
.pfoot { flex: none; display: flex; justify-content: space-between; align-items: center; height: 19px; width: 182px; padding: 0 1px 2px 2px; }
.pfoot a { color: #2b6fb8; }
.pfoot button { width: 50px; height: 14px; background: #ccc; color: #999; }

.center { flex: 1; min-width: 0; display: flex; flex-direction: column; }
.doctabs { flex: none; display: flex; height: 13px; background: #cdcdcd; color: #666; }
.doctabs button { width: 88px; padding-left: 4px; gap: 3px; justify-content: flex-start; }
.doctabs .on { width: 85px; gap: 6px; background: #fff; color: #222; font-weight: 600; padding: 0 2px; }
.doctabs .x { margin-left: auto; }
.doctabs .tail { width: 13px; margin-left: auto; padding: 0; justify-content: center; }
.viewrow { flex: 1; min-height: 0; display: flex; }
.canvas { flex: 1; position: relative; min-width: 0; background: #fff; overflow: hidden; }
.drawing { width: 100%; height: 100%; }
.lvl { font: 11px "Liberation Sans", sans-serif; fill: #333; text-anchor: end; }
.navbar { position: absolute; top: 2px; right: 1px; width: 24px; height: 80px; background: #f4f4f4; border: 1px solid #ccc; border-radius: 4px; }
.vscroll { flex: none; width: 12px; display: flex; flex-direction: column; align-items: center; justify-content: space-between; padding: 3px 0; background: #efefef; }
.vscroll i { width: 10px; height: 12px; background: #ccc; }
.vcb { flex: none; display: flex; align-items: center; height: 13px; padding: 0 12px 2px 0; background: #f0f0f0; }
.vcb button { width: 14px; height: 11px; }
.vcb .scale { width: 53px; padding-left: 6px; }
.hscroll { flex: 1; display: flex; justify-content: center; padding-left: 6px; }
.hscroll i { width: 12px; height: 10px; background: #c8c8c8; }

.browser { flex: none; width: 144px; display: flex; flex-direction: column; background: #fff; border-left: 3px solid #e0e0e0; }
.tree { flex: none; list-style: none; margin: 0; padding: 0; height: 260px; display: flex; flex-direction: column; }
.tree li { flex: 1; display: flex; align-items: center; min-height: 0; white-space: nowrap; }
.tree b { font-weight: 400; margin-left: 3px; line-height: 12px; }
.tree .cur { background: #e0e0e0; margin: 0 0 0 2px; padding: 0 1px; }
.g { position: relative; width: 14px; align-self: stretch; flex: none; display: flex; align-items: center; justify-content: center; font-style: normal; }
.g.v::before, .g.l::before, .g.h::after { content: ""; position: absolute; background: #d4d4d4; }
.g.v::before { left: 7px; top: 0; bottom: 0; width: 1px; }
.g.l::before { left: 7px; top: 0; bottom: 50%; width: 1px; }
.g.h::after { left: 8px; right: -2px; top: 50%; height: 1px; }
.g.x { font-size: 7px; line-height: 6px; color: #555; background: linear-gradient(#f4f4f4, #f4f4f4) center / 5px 5px no-repeat, linear-gradient(#aaa, #aaa) center / 7px 7px no-repeat; }
.g.x.h::after { left: 11px; }
.bscroll { flex: none; margin-top: auto; height: 13px; display: flex; align-items: center; gap: 2px; padding: 0 1px; background: #f0f0f0; }
.bscroll i { flex: 1; height: 10px; margin-right: 6px; background: #c9c9c9; }

.status { flex: none; display: flex; align-items: center; height: 22px; padding: 0 50px 4px 0; background: #cbcbcb; }
.msg { width: 449px; }
.status .sel { height: 13px; padding-left: 2px; }
.ws { width: 141px; margin-left: 5px; }
.req { display: flex; align-items: center; width: 36px; margin-left: 6px; gap: 2px; color: #555; }
.status button { width: 18px; height: 14px; }
.dm { width: 140px; margin-left: 4px; color: #777; }
.toggles { display: flex; align-items: center; margin-left: auto; }

.taskbar { flex: none; display: flex; justify-content: space-between; height: 21px; background: #40403c; color: #eee; overflow: hidden; }
.apps { display: flex; }
.apps button { width: 34px; height: 21px; padding-bottom: 3px; border-bottom: 1px solid transparent; }
.apps .open { border-color: #b9cfe0; }
.apps .act { background: #6b6b68; }
.tray { display: flex; align-items: center; gap: 6px; padding: 0 16px 4px 0; }
.weather { display: flex; align-items: center; gap: 6px; font-size: 9px; margin-right: 12px; }
.tray time { text-align: center; line-height: 11px; width: 36px; }
.note { margin-left: 8px; }
```
